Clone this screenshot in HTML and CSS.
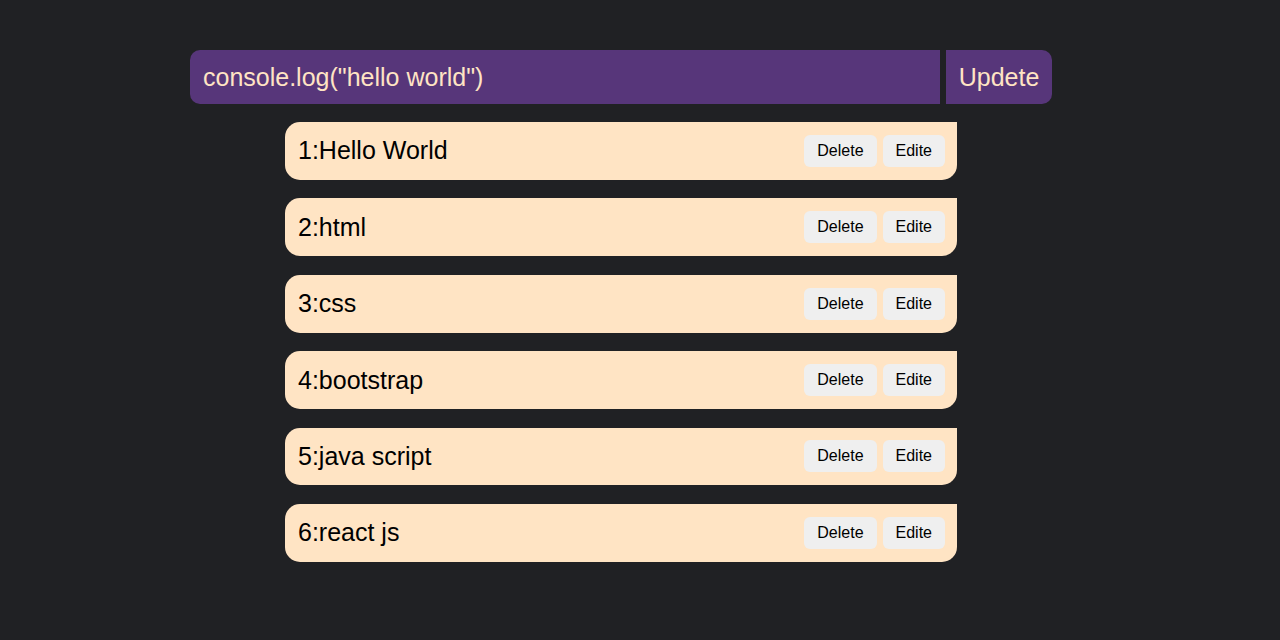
FILE: index.html
```html
<!DOCTYPE html>
<html>
<head>
<meta charset="utf-8">
<link rel="stylesheet" href="styles.css">
</head>
<body>
<div class="app">
  <div class="bar">
    <input class="field" type="text" value='console.log("hello world")'>
    <button class="update">Updete</button>
  </div>
  <ul class="list">
    <li class="item"><span class="label">1:Hello World</span><span class="actions"><button class="btn">Delete</button><button class="btn">Edite</button></span></li>
    <li class="item"><span class="label">2:html</span><span class="actions"><button class="btn">Delete</button><button class="btn">Edite</button></span></li>
    <li class="item"><span class="label">3:css</span><span class="actions"><button class="btn">Delete</button><button class="btn">Edite</button></span></li>
    <li class="item"><span class="label">4:bootstrap</span><span class="actions"><button class="btn">Delete</button><button class="btn">Edite</button></span></li>
    <li class="item"><span class="label">5:java script</span><span class="actions"><button class="btn">Delete</button><button class="btn">Edite</button></span></li>
    <li class="item"><span class="label">6:react js</span><span class="actions"><button class="btn">Delete</button><button class="btn">Edite</button></span></li>
  </ul>
</div>
</body>
</html>
```

FILE: styles.css
```css
html, body {
  margin: 0;
  padding: 0;
  background: #202124;
  font-family: "Liberation Sans", Arial, sans-serif;
}

.app {
  display: flex;
  flex-direction: column;
  align-items: center;
  padding: 50px 38px 0 0;
}

.bar {
  display: flex;
  gap: 6px;
  height: 54px;
}

.field {
  width: 750px;
  box-sizing: border-box;
  border: none;
  outline: none;
  background: #57367a;
  color: #ffe4c4;
  font-family: inherit;
  font-size: 25px;
  padding: 0 13px;
  border-radius: 10px 0 0 10px;
}

.update {
  width: 106px;
  border: none;
  background: #57367a;
  color: #ffe4c4;
  font-family: inherit;
  font-size: 25px;
  padding: 0;
  border-radius: 0 10px 10px 0;
}

.list {
  list-style: none;
  margin: 0;
  padding: 0;
  display: flex;
  flex-direction: column;
  gap: 18.6px;
  margin-top: 18px;
}

.item {
  width: 672px;
  height: 57.8px;
  box-sizing: border-box;
  background: #ffe4c4;
  border-radius: 15px 0 15px 15px;
  display: flex;
  align-items: center;
  justify-content: space-between;
  padding: 0 12px 0 13px;
}

.label {
  font-size: 25px;
  color: #000;
}

.actions {
  display: flex;
  gap: 6px;
}

.btn {
  border: none;
  background: #efefef;
  color: #000;
  font-family: inherit;
  font-size: 16px;
  height: 32px;
  padding: 0 13px;
  border-radius: 6px;
}
```
